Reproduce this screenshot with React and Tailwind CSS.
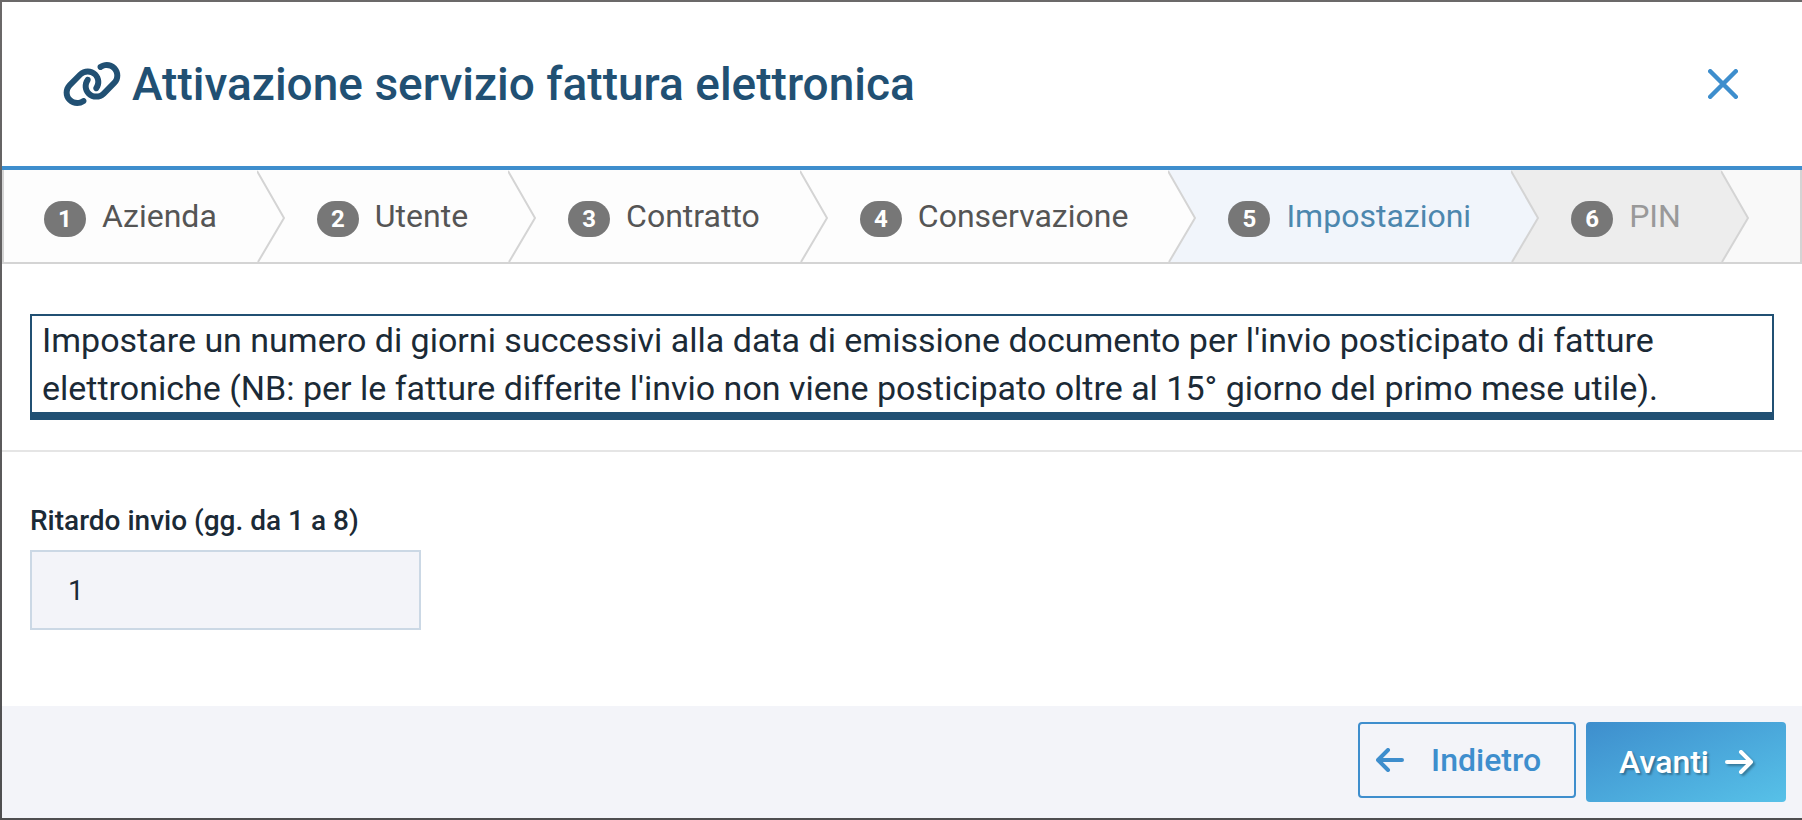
import { useState } from 'react';
import { FaLink } from 'react-icons/fa6';

const steps = [
  { name: 'Azienda', bg: 'bg-[#fdfdfd]', fill: 'fill-[#fdfdfd]', text: 'text-[#555555]' },
  { name: 'Utente', bg: 'bg-[#fdfdfd]', fill: 'fill-[#fdfdfd]', text: 'text-[#555555]' },
  { name: 'Contratto', bg: 'bg-[#fdfdfd]', fill: 'fill-[#fdfdfd]', text: 'text-[#555555]' },
  { name: 'Conservazione', bg: 'bg-[#fdfdfd]', fill: 'fill-[#fdfdfd]', text: 'text-[#555555]' },
  { name: 'Impostazioni', bg: 'bg-[#f1f5fb]', fill: 'fill-[#f1f5fb]', text: 'text-[#4c87ae]' },
  { name: 'PIN', bg: 'bg-[#ededed]', fill: 'fill-[#ededed]', text: 'text-[#999999]' },
];

function ArrowIcon({ className }) {
  return (
    <svg viewBox="0 0 28 24" className={className} fill="none" stroke="currentColor" strokeWidth="4" strokeLinecap="round" strokeLinejoin="round" aria-hidden="true">
      <path d="M2 12H26M16 2L26 12L16 22" />
    </svg>
  );
}

function Step({ step, number, isActive, isDisabled, onSelect }) {
  return (
    <li className={`relative ${step.bg}`}>
      <button
        type="button"
        onClick={onSelect}
        disabled={isDisabled}
        aria-current={isActive ? 'step' : undefined}
        className={`flex items-baseline gap-4 py-[22px] pr-10 text-[32px] leading-[48px] ${number === 1 ? 'pl-10' : 'pl-[60px]'} ${step.text}`}
      >
        <span className="w-[42px] h-9 rounded-[20px] bg-[#777777] text-center text-2xl leading-9 font-bold text-white">
          {number}
        </span>
        {step.name}
      </button>
      {/* Chevron over the next step */}
      <svg viewBox="0 0 28 92" className="absolute left-full top-0 z-10 w-7 h-full" aria-hidden="true">
        <path d="M0 1L27 48L1 92H0Z" className={step.fill} />
        <path d="M0 1L27 48L1 92" fill="none" stroke="#d4d4d4" strokeWidth="2" />
      </svg>
    </li>
  );
}

export default function App() {
  const [current, setCurrent] = useState(4);
  const [delay, setDelay] = useState('1');

  return (
    <div className="min-h-screen flex flex-col pt-[2px] pl-[2px] pb-[2px] bg-linear-to-b from-[#6b6969] to-[#4e4e50] font-[Roboto,sans-serif] text-[#1b2a36]">
      <div role="dialog" aria-labelledby="dialog-title" className="flex-1 flex flex-col bg-white">

        {/* Header */}
        <header className="flex items-center justify-between h-[168px] pl-[60px] pr-16 border-b-4 border-[#3e8ecd]">
          <h1 id="dialog-title" className="flex items-center gap-[10px] text-[46px] font-medium text-[#215073]">
            <FaLink className="w-[60px] h-12" aria-hidden="true" />
            Attivazione servizio fattura elettronica
          </h1>
          <button type="button" aria-label="Chiudi" className="text-[#3e8ecd]">
            <svg viewBox="0 0 30 30" className="w-[30px] h-[30px]" fill="none" stroke="currentColor" strokeWidth="4.5" strokeLinecap="round" aria-hidden="true">
              <path d="M2.25 2.25L27.75 27.75M27.75 2.25L2.25 27.75" />
            </svg>
          </button>
        </header>

        {/* Steps */}
        <ol className="flex border-x-2 border-b-2 border-[#d4d4d4] bg-[#f9f9f9]">
          {steps.map((step, index) => (
            <Step
              key={step.name}
              step={step}
              number={index + 1}
              isActive={index === current}
              isDisabled={index === 5}
              onSelect={() => setCurrent(index)}
            />
          ))}
        </ol>

        <main className="flex-1">
          <div className="px-7 pt-[50px] pb-[30px] border-b-2 border-[#e5e5e5]">
            <p className="border-2 border-b-8 border-[#215073] px-[10px] text-[34px] leading-[48px]">
              Impostare un numero di giorni successivi alla data di emissione documento per l'invio posticipato di fatture
              elettroniche (NB: per le fatture differite l'invio non viene posticipato oltre al 15° giorno del primo mese utile).
            </p>
          </div>
          <div className="flex flex-col items-start gap-2 px-7 pt-12">
            <label htmlFor="delay" className="text-[28px] leading-[42px] font-medium">
              Ritardo invio (gg. da 1 a 8)
            </label>
            <input
              id="delay"
              type="text"
              inputMode="numeric"
              value={delay}
              onChange={(e) => setDelay(e.target.value)}
              className="w-[391px] h-20 px-9 border-2 border-[#cbd8e5] bg-[#f3f4f9] text-[28px]"
            />
          </div>
        </main>

        {/* Footer */}
        <footer className="flex items-start justify-end gap-[10px] p-4 bg-[#f3f4f9] text-[32px] font-medium">
          <button
            type="button"
            onClick={() => setCurrent(Math.max(current - 1, 0))}
            className="flex items-center gap-[27px] h-[76px] pl-4 pr-[33px] border-2 border-[#3e8ecd] rounded-sm text-[#3e8ecd]"
          >
            <ArrowIcon className="w-7 h-6 rotate-180" />
            Indietro
          </button>
          <button
            type="button"
            onClick={() => setCurrent(Math.min(current + 1, 5))}
            className="flex items-center gap-4 h-20 px-[33px] rounded-sm bg-linear-to-br from-[#3e8ecd] to-[#57c1e8] text-white text-shadow-[2px_2px_2px_rgb(0_0_0/0.3)]"
          >
            Avanti
            <ArrowIcon className="w-7 h-6 drop-shadow-[2px_2px_1px_rgb(0_0_0/0.3)]" />
          </button>
        </footer>
      </div>
    </div>
  );
}
